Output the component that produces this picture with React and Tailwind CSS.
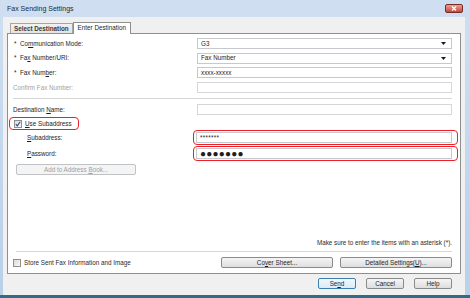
import React from "react";

const Box = ({ children, className = "" }) => (
  <div className={`h-[11px] flex-1 flex items-center px-[3px] bg-white border border-[#c5c8cc] ${className}`}>
    {children}
  </div>
);

const Select = ({ value }) => (
  <Box className="justify-between border-[#b9bcc0]">
    <span>{value}</span>
    <svg width="5" height="3" viewBox="0 0 5 3" className="mr-[2px]">
      <path d="M0 0h5L2.5 3z" fill="#1a1a1a" />
    </svg>
  </Box>
);

const Row = ({ label, star, disabled, children, className = "" }) => (
  <div className={`flex items-center h-[11px] ${className}`}>
    <div className={`w-[184px] flex ${disabled ? "text-[#a3a3a3]" : ""}`}>
      {star && <span className="w-[7px] pl-[1px]">*</span>}
      {label}
    </div>
    {children}
  </div>
);

const Btn = ({ children, className = "", disabled, primary }) => (
  <div
    className={`h-[11px] flex items-center justify-center rounded-[2px] border ${
      disabled
        ? "border-[#bfc3c6] bg-[#f4f4f4] text-[#a0a0a0]"
        : primary
        ? "border-[#3c7fb1] bg-gradient-to-b from-[#f2f8fc] to-[#dcebf6]"
        : "border-[#8a8a8a] bg-gradient-to-b from-[#f5f5f5] to-[#dedede]"
    } ${className}`}
  >
    {children}
  </div>
);

const Check = ({ checked }) => (
  <div className="w-[8px] h-[8px] border border-[#8f8f8f] bg-gradient-to-br from-[#dcdcdc] to-[#f8f8f8] flex items-center justify-center">
    {checked && (
      <svg width="6" height="6" viewBox="0 0 6 6">
        <path d="M0.8 3.2L2.3 4.8L5.2 0.8" stroke="#2a4a8a" strokeWidth="1.1" fill="none" />
      </svg>
    )}
  </div>
);

export default function App() {
  return (
    <div className="w-[470px] h-[298px] flex flex-col overflow-hidden bg-gradient-to-b from-[#cfdff1] to-[#b9d0e9] font-['Liberation_Sans',Arial,sans-serif] text-[6.3px] text-[#1e1e1e]">
      {/* title bar */}
      <div className="h-[17px] flex items-center justify-between pl-[7px] pr-[7px] shrink-0">
        <span className="text-[7px] text-[#1c2a3a] mt-[2px]">Fax Sending Settings</span>
        <div className="w-[18px] h-[9px] mt-[-1px] rounded-[2px] border border-[#7a2b24] bg-gradient-to-b from-[#e7a196] to-[#c5453a] flex items-center justify-center">
          <svg width="6" height="5" viewBox="0 0 6 5">
            <path d="M1 0.5L5 4.5M5 0.5L1 4.5" stroke="#fff" strokeWidth="1.3" />
          </svg>
        </div>
      </div>

      {/* client area */}
      <div className="flex-1 flex flex-col ml-[3px] mr-[5px] bg-[#f0f0f0]">
        {/* tabs */}
        <div className="flex items-end h-[16px] pl-[7px] shrink-0">
          <div className="h-[10px] px-[3px] flex items-center border border-b-0 border-[#a5a5a5] bg-gradient-to-b from-[#f2f2f2] to-[#e3e3e3] font-bold text-[#3a3a3a]">
            Select Destination
          </div>
          <div className="h-[12px] -mb-px z-10 px-[4px] pb-px flex items-center border border-b-0 border-[#8e8f8f] bg-white">
            Enter Destination
          </div>
        </div>

        {/* panel */}
        <div className="flex-1 flex flex-col ml-[4px] mr-[4px] border border-[#8e8f8f] bg-white pl-[5px] pr-[8px] pt-[4px] pb-[5px]">
          <div className="flex flex-col gap-[3.7px]">
            <Row star label={<span>Co<u>m</u>munication Mode:</span>}>
              <Select value="G3" />
            </Row>
            <Row star label={<span>Fa<u>x</u> Number/URI:</span>}>
              <Select value="Fax Number" />
            </Row>
            <Row star label={<span>Fax Num<u>b</u>er:</span>}>
              <Box>xxxx-xxxxx</Box>
            </Row>
            <Row disabled label="Confirm Fax Number:">
              <Box className="border-[#d4d6d9]" />
            </Row>
          </div>
          <div className="h-px bg-[#d6d6d6] mt-[5px]" />
          <Row className="mt-[5px]" label={<span>Destination <u>N</u>ame:</span>}>
            <Box className="border-[#d4d6d9]" />
          </Row>

          <div className="mt-[2px] -ml-[4px] self-start flex items-center gap-[3px] h-[13px] pl-[4px] pr-[6px] border-[1.5px] border-[#ee2027] rounded-[4px]">
            <Check checked />
            <span>
              <u>U</u>se Subaddress
            </span>
          </div>

          <div className="flex flex-col gap-[1px] pl-[14px]">
            <div className="flex items-center">
              <div className="w-[166px]">
                <u>S</u>ubaddress:
              </div>
              <div className="flex-1 -mr-[6px] py-[1px] pl-[2px] pr-[5px] border-[1.5px] border-[#ee2027] rounded-[4px]">
                <Box className="tracking-[0.3px]">*******</Box>
              </div>
            </div>
            <div className="flex items-center">
              <div className="w-[166px]">
                <u>P</u>assword:
              </div>
              <div className="flex-1 -mr-[6px] py-[1px] pl-[2px] pr-[5px] border-[1.5px] border-[#ee2027] rounded-[4px]">
                <Box className="border-[#7eb4ea] text-[10px] tracking-[0.2px] leading-none">●●●●●●●</Box>
              </div>
            </div>
          </div>

          <Btn disabled className="w-[120px] mt-[3px] ml-[3px]">
            <span>
              Add to Address <u>B</u>ook...
            </span>
          </Btn>

          <div className="flex-1" />

          <div className="text-right text-[#2a2a2a]">Make sure to enter the items with an asterisk (*).</div>
          <div className="h-px bg-[#d6d6d6] mt-[4px] ml-[3px]" />
          <div className="flex items-center mt-[5px] h-[11px]">
            <Check />
            <span className="ml-[3px] text-[#2a2a2a]">Store Sent Fax Information and Image</span>
            <div className="flex-1" />
            <Btn className="w-[112px]">
              <span>
                Co<u>v</u>er Sheet...
              </span>
            </Btn>
            <Btn className="w-[112px] ml-[7px]">
              <span>
                Detailed Settings(<u>U</u>)...
              </span>
            </Btn>
          </div>
        </div>

        {/* bottom buttons */}
        <div className="h-[21px] shrink-0 flex items-center justify-end gap-[10px] pr-[13px] pb-[2px]">
          <Btn primary className="w-[38px]">
            <span>
              Se<u>n</u>d
            </span>
          </Btn>
          <Btn className="w-[38px]">Cancel</Btn>
          <Btn className="w-[38px]">Help</Btn>
        </div>
      </div>
      <div className="h-[3px] shrink-0 bg-[#2d6d86]" />
    </div>
  );
}
